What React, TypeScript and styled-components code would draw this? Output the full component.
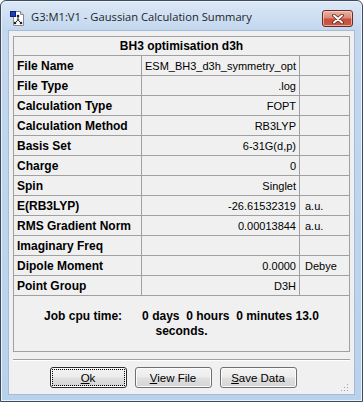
import React from 'react';
import styled, { createGlobalStyle } from 'styled-components';

const GlobalStyle = createGlobalStyle`
  html, body {
    margin: 0;
    padding: 0;
  }
  body {
    width: 363px;
    height: 402px;
    overflow: hidden;
    background: #ffffff;
  }
`;

interface Row {
  label: string;
  value: string;
  unit?: string;
}

const rows: Row[] = [
  { label: 'File Name', value: 'ESM_BH3_d3h_symmetry_opt' },
  { label: 'File Type', value: '.log' },
  { label: 'Calculation Type', value: 'FOPT' },
  { label: 'Calculation Method', value: 'RB3LYP' },
  { label: 'Basis Set', value: '6-31G(d,p)' },
  { label: 'Charge', value: '0' },
  { label: 'Spin', value: 'Singlet' },
  { label: 'E(RB3LYP)', value: '-26.61532319', unit: 'a.u.' },
  { label: 'RMS Gradient Norm', value: '0.00013844', unit: 'a.u.' },
  { label: 'Imaginary Freq', value: '' },
  { label: 'Dipole Moment', value: '0.0000', unit: 'Debye' },
  { label: 'Point Group', value: 'D3H' },
];

const Window = styled.div`
  box-sizing: border-box;
  width: 363px;
  height: 402px;
  border: 1px solid #3e4b5c;
  border-radius: 6px 6px 0 0;
  background: linear-gradient(180deg, #dce8f6 0px, #c3d8ef 28px, #b9d1ec 100%);
  box-shadow: inset 0 0 0 1px #e9f1fa;
  padding: 0 7px 6px 7px;
  display: flex;
  flex-direction: column;
`;

const TitleBar = styled.div`
  height: 29px;
  display: flex;
  align-items: flex-start;
`;

const AppIcon = styled.svg`
  width: 16px;
  height: 16px;
  margin: 9px 0 0 2px;
  flex: none;
`;

const Title = styled.span`
  font-family: 'Open Sans', 'Noto Sans', sans-serif;
  font-size: 11.2px;
  color: #1e1e1e;
  margin: 8px 0 0 5px;
  white-space: nowrap;
`;

const CloseButton = styled.div`
  box-sizing: border-box;
  width: 31px;
  height: 17px;
  margin: 9px 2px 0 auto;
  border: 1px solid #6b2b22;
  border-radius: 3px;
  background: linear-gradient(180deg, #eab3a6 0%, #db8a78 45%, #c94f3b 55%, #c75a45 100%);
  box-shadow: inset 0 0 0 1px rgba(255, 220, 210, 0.6);
  display: flex;
  align-items: center;
  justify-content: center;
`;

const Client = styled.div`
  position: relative;
  flex: 1;
  background: #f0f0f0;
  border: 1px solid #a6bcd6;
  padding: 5px 4px 0 4px;
  display: flex;
  flex-direction: column;
`;

const SummaryBox = styled.div`
  border: 1px solid #a0a0a0;
  font-family: 'Liberation Sans', Arial, sans-serif;
  color: #000;
`;

const HeaderRow = styled.div`
  height: 18px;
  border-bottom: 1px solid #a0a0a0;
  display: flex;
  align-items: center;
  justify-content: center;
  font-size: 12px;
  font-weight: bold;
`;

const Grid = styled.div`
  display: grid;
  grid-template-columns: 128px 158px 1fr;
  grid-auto-rows: 20px;
`;

const Cell = styled.div<{ $align?: 'left' | 'right'; $last?: boolean }>`
  box-sizing: border-box;
  border-bottom: 1px solid #a0a0a0;
  border-right: ${({ $last }) => ($last ? 'none' : '1px solid #a0a0a0')};
  display: flex;
  align-items: center;
  justify-content: ${({ $align }) => ($align === 'right' ? 'flex-end' : 'flex-start')};
  padding: 0 3px;
  white-space: nowrap;
  overflow: hidden;
`;

const Label = styled(Cell)`
  font-size: 12px;
  font-weight: bold;
`;

const Value = styled(Cell)`
  font-size: 11px;
`;

const Unit = styled(Cell)`
  font-size: 11px;
  padding-left: 5px;
`;

const JobTime = styled.div`
  height: 55px;
  box-sizing: border-box;
  padding: 13px 10px 0 10px;
  text-align: center;
  white-space: pre-wrap;
  font-size: 12px;
  font-weight: bold;
  line-height: 15px;
`;

const Separator = styled.div`
  margin-top: 7px;
  height: 0;
  border-top: 1px solid #a0a0a0;
  border-bottom: 1px solid #ffffff;
`;

const ButtonRow = styled.div`
  display: flex;
  justify-content: center;
  gap: 8px;
  margin-top: 6px;
  padding-right: 17px;
`;

const Button = styled.div<{ $default?: boolean }>`
  position: relative;
  box-sizing: border-box;
  width: 77px;
  height: 21px;
  border: 1px solid ${({ $default }) => ($default ? '#2c2c2c' : '#707070')};
  border-radius: 3px;
  background: linear-gradient(180deg, #f4f4f4 0%, #ececec 48%, #e0e0e0 52%, #d4d4d4 100%);
  box-shadow: inset 0 0 0 1px #fbfbfb;
  font-family: 'Liberation Sans', Arial, sans-serif;
  font-size: 11.5px;
  color: #000;
  display: flex;
  align-items: center;
  justify-content: center;

  &::after {
    content: '';
    display: ${({ $default }) => ($default ? 'block' : 'none')};
    position: absolute;
    inset: 1px;
    border: 1px dotted #000;
  }
`;

const Grip = styled.svg`
  position: absolute;
  right: 5px;
  bottom: 2px;
  width: 10px;
  height: 10px;
`;

const ModelIcon = () => (
  <AppIcon viewBox="0 0 16 16">
    <path d="M3.5 1.5h7l3 3v11h-10z" fill="#fff" stroke="#8a8a8a" />
    <path d="M10.5 1.5v3h3" fill="#e6e6e6" stroke="#8a8a8a" />
    <path d="M8 6v4M8 10l-3 3M8 10l3 3" stroke="#333" strokeWidth="1" />
    <circle cx="8" cy="6" r="1.3" fill="#222" />
    <circle cx="8" cy="10" r="1.3" fill="#555" />
    <circle cx="5" cy="13" r="1.3" fill="#222" />
    <circle cx="11" cy="13" r="1.3" fill="#222" />
    <rect x="0.5" y="1.5" width="5" height="5" fill="#1b3fbf" stroke="#0b1f70" />
  </AppIcon>
);

const CloseGlyph = () => (
  <svg width="12" height="10" viewBox="0 0 12 10">
    <path d="M2 1.5l8 7M10 1.5l-8 7" stroke="#5a2219" strokeWidth="3.6" strokeLinecap="round" />
    <path d="M2 1.5l8 7M10 1.5l-8 7" stroke="#ffffff" strokeWidth="2" strokeLinecap="round" />
  </svg>
);

const App: React.FC = () => {
  return (
    <>
      <GlobalStyle />
      <Window>
        <TitleBar>
          <ModelIcon />
          <Title>G3:M1:V1 - Gaussian Calculation Summary</Title>
          <CloseButton>
            <CloseGlyph />
          </CloseButton>
        </TitleBar>
        <Client>
          <SummaryBox>
            <HeaderRow>BH3 optimisation d3h</HeaderRow>
            <Grid>
              {rows.map((r) => (
                <React.Fragment key={r.label}>
                  <Label>{r.label}</Label>
                  <Value $align="right">{r.value}</Value>
                  <Unit $last>{r.unit ?? ''}</Unit>
                </React.Fragment>
              ))}
            </Grid>
            <JobTime>{'Job cpu time:      0 days  0 hours  0 minutes 13.0 seconds.'}</JobTime>
          </SummaryBox>
          <Separator />
          <ButtonRow>
            <Button $default>
              <span>
                <u>O</u>k
              </span>
            </Button>
            <Button>
              <span>
                <u>V</u>iew File
              </span>
            </Button>
            <Button>
              <span>
                <u>S</u>ave Data
              </span>
            </Button>
          </ButtonRow>
          <Grip viewBox="0 0 10 10">
            {[
              [8, 2],
              [8, 5],
              [5, 5],
              [8, 8],
              [5, 8],
              [2, 8],
            ].map(([x, y]) => (
              <rect key={`${x}-${y}`} x={x} y={y} width="1" height="1" fill="#a0a0a0" />
            ))}
          </Grip>
        </Client>
      </Window>
    </>
  );
};

export default App;
